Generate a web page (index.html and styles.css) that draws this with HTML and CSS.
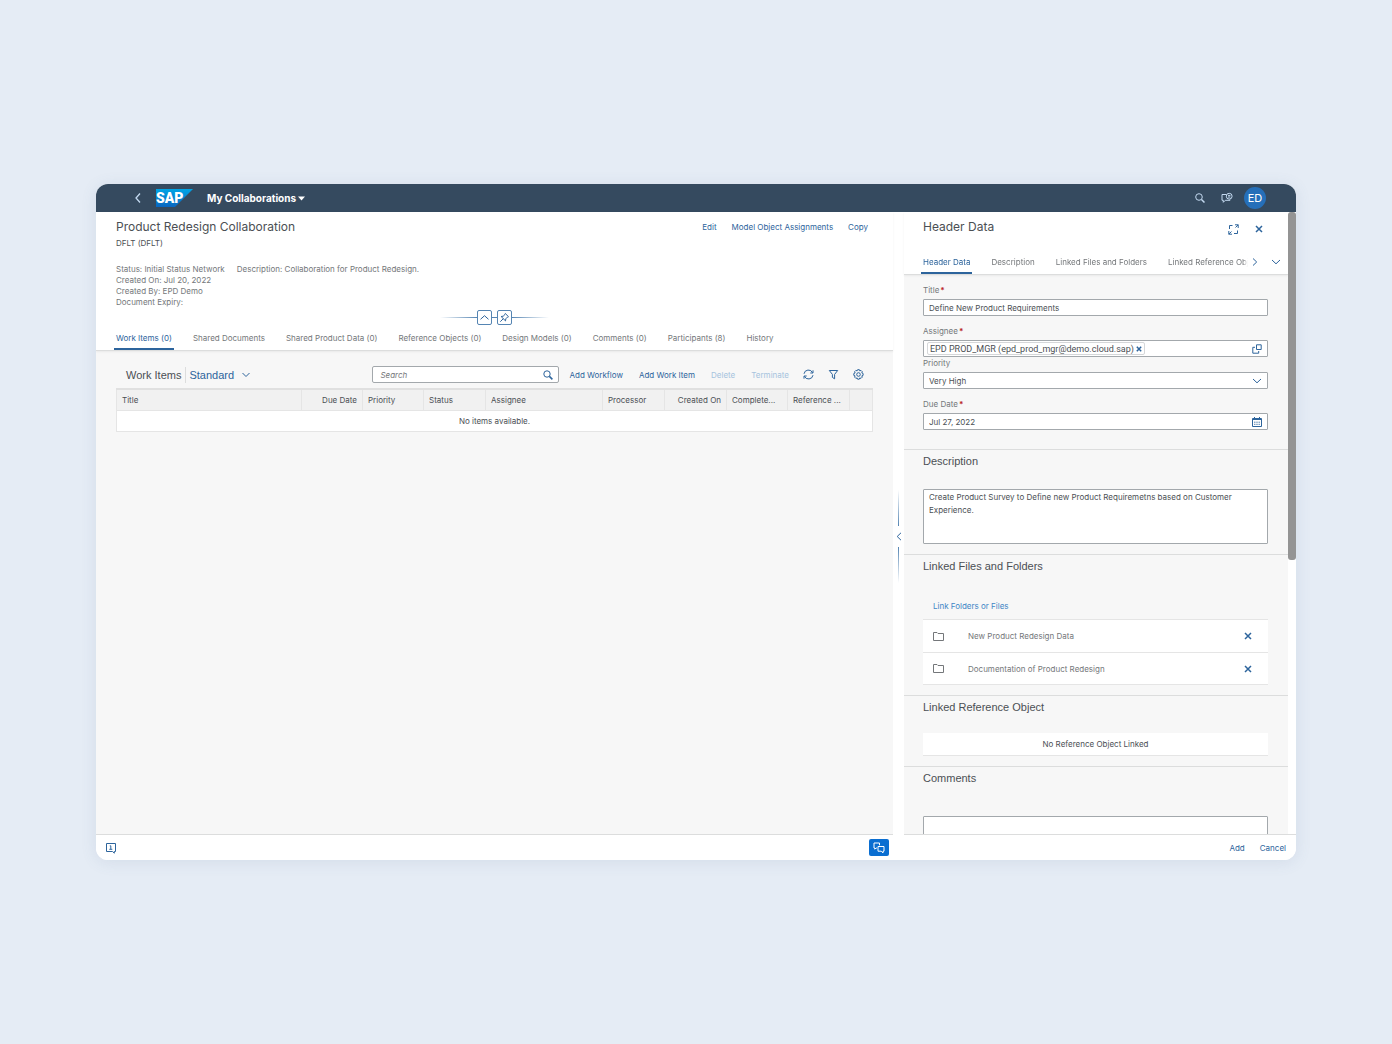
FILE: index.html
```html
<!DOCTYPE html>
<html lang="en">
<head>
<meta charset="utf-8">
<meta name="viewport" content="width=device-width, initial-scale=1">
<title>My Collaborations</title>
<link rel="stylesheet" href="styles.css">
</head>
<body>
<div class="app">
  <header class="shell">
    <button class="icon-btn shell-back" aria-label="Back"><svg width="8" height="12" viewBox="0 0 8 12"><path d="M6 1.500 2 6l4 4.500" stroke-width="1.300"/></svg></button>
    <svg class="logo" width="37" height="18" viewBox="0 0 37 18" role="img" aria-label="SAP">
      <defs><linearGradient id="sap" x1="0" y1="0" x2="0" y2="1"><stop offset="0" stop-color="#00a5e5"/><stop offset="1" stop-color="#0a66c0"/></linearGradient></defs>
      <path d="M0 0h37L19 18H0z" fill="url(#sap)"/>
      <text x="0" y="14">SAP</text>
    </svg>
    <button class="shell-title">My Collaborations <svg width="7" height="5" viewBox="0 0 7 5"><path d="M0 .5h7L3.500 4.500z"/></svg></button>
    <div class="shell-tools">
      <button class="icon-btn" aria-label="Search"><svg width="12" height="12" viewBox="0 0 12 12"><circle cx="5" cy="5" r="3.300"/><path d="m7.500 7.500 3 3" stroke-width="1.500"/></svg></button>
      <button class="icon-btn" aria-label="Help"><svg width="12" height="12" viewBox="0 0 12 12"><path d="M5.500 2.500H1v5.800h1.300v2l2-2H9V7.500"/><circle cx="8.200" cy="4.200" r="2.900"/><path d="M7 3.400h2.400M7 5h2.400"/></svg></button>
      <button class="avatar">ED</button>
    </div>
  </header>

  <main class="workspace">
    <section class="page">
      <div class="page-head">
        <div class="title-row">
          <h1>Product Redesign Collaboration</h1>
          <div class="actions">
            <button class="link-btn">Edit</button>
            <button class="link-btn">Model Object Assignments</button>
            <button class="link-btn">Copy</button>
          </div>
        </div>
        <p class="subtitle">DFLT (DFLT)</p>
        <div class="facts">
          <div class="fact-row"><span>Status: Initial Status Network</span><span>Description: Collaboration for Product Redesign.</span></div>
          <div>Created On: Jul 20, 2022</div>
          <div>Created By: EPD Demo</div>
          <div>Document Expiry:</div>
        </div>
        <div class="collapse">
          <span class="ray ray-left"></span>
          <button class="square-btn" aria-label="Collapse header"><svg width="11" height="11" viewBox="0 0 11 11"><path d="m1.500 7.300 4-3.600 4 3.600"/></svg></button>
          <span class="joint"></span>
          <button class="square-btn" aria-label="Pin header"><svg width="11" height="11" viewBox="0 0 11 11"><path d="M6.300 1.500 9.500 4.700 8.600 5 6.800 6.800 6.500 8.900 2.100 4.500l2.100-.3L6 2.400zM4.300 6.700 1.300 9.700"/></svg></button>
          <span class="ray ray-right"></span>
        </div>
        <nav class="tabs">
          <a href="#items" class="tab active">Work Items (0)</a>
          <a href="#documents" class="tab">Shared Documents</a>
          <a href="#data" class="tab">Shared Product Data (0)</a>
          <a href="#objects" class="tab">Reference Objects (0)</a>
          <a href="#models" class="tab">Design Models (0)</a>
          <a href="#comments" class="tab">Comments (0)</a>
          <a href="#participants" class="tab">Participants (8)</a>
          <a href="#history" class="tab">History</a>
        </nav>
      </div>

      <div class="page-body" id="items">
        <div class="toolbar">
          <h2>Work Items</h2>
          <button class="variant">Standard <svg width="10" height="6" viewBox="0 0 10 6"><path d="m1.500 1 3.500 3.500L8.500 1"/></svg></button>
          <div class="search">
            <input type="search" placeholder="Search" aria-label="Search work items">
            <button class="icon-btn" aria-label="Run search"><svg width="10" height="10" viewBox="0 0 10 10"><circle cx="4" cy="4" r="3.200"/><path d="m6.400 6.400 3 3" stroke-width="1.500"/></svg></button>
          </div>
          <div class="toolbar-actions">
            <button class="link-btn">Add Workflow</button>
            <button class="link-btn">Add Work Item</button>
            <button class="link-btn" disabled>Delete</button>
            <button class="link-btn" disabled>Terminate</button>
          </div>
          <div class="toolbar-icons">
            <button class="icon-btn" aria-label="Refresh"><svg width="11" height="11" viewBox="0 0 11 11"><path d="M1 4.800A4.500 4.500 0 0 1 9.600 3.800M10 6.200A4.500 4.500 0 0 1 1.400 7.200M10 1.300v2.700H7.300M1 9.700V7h2.700"/></svg></button>
            <button class="icon-btn" aria-label="Filter"><svg width="11" height="11" viewBox="0 0 11 11"><path d="M1.300 1.500h8.400L6.600 5.400v4.400L4.400 8.400v-3z"/></svg></button>
            <button class="icon-btn" aria-label="Settings"><svg width="11" height="11" viewBox="0 0 11 11"><path d="m4.600.7h1.800l.4 1.200 1.200-.5 1.300 1.300-.5 1.200 1.300.6v1.900l-1.300.5.5 1.200-1.300 1.300-1.200-.5-.5 1.300H4.600l-.5-1.300-1.200.5-1.300-1.300.5-1.200-1.300-.5V4.500l1.300-.5-.5-1.300 1.300-1.300 1.200.5z"/><circle cx="5.500" cy="5.500" r="1.800"/></svg></button>
          </div>
        </div>
        <table>
          <colgroup><col><col class="c-slim"><col class="c-slim"><col class="c-mid"><col class="c-wide"><col class="c-mid"><col class="c-mid"><col class="c-slim"><col class="c-mid"><col class="c-nav"></colgroup>
          <thead>
            <tr><th>Title</th><th class="num">Due Date</th><th>Priority</th><th>Status</th><th>Assignee</th><th>Processor</th><th class="num">Created On</th><th>Complete...</th><th>Reference ...</th><th></th></tr>
          </thead>
          <tbody><tr><td colspan="10">No items available.</td></tr></tbody>
        </table>
      </div>
    </section>

    <div class="splitter">
      <span class="beam beam-up"></span>
      <button class="icon-btn" aria-label="Resize panel"><svg width="6" height="9" viewBox="0 0 6 9"><path d="M5 .8 1.200 4.500 5 8.200"/></svg></button>
      <span class="beam beam-down"></span>
    </div>

    <aside class="panel">
      <div class="panel-main">
        <div class="panel-head">
          <div class="panel-title">
            <h2>Header Data</h2>
            <button class="icon-btn" aria-label="Full screen"><svg width="11" height="11" viewBox="0 0 11 11"><path d="M4.500 1.500H1.500V5M6 9.500h3.500V6.500M7 .8h3.200V4M10.200.8 7.500 3.500M4 10.200H.8V7M.8 10.200 3.500 7.500"/></svg></button>
            <button class="icon-btn" aria-label="Close"><svg class="cross" width="8" height="8" viewBox="0 0 8 8"><path d="m1 1 6 6M7 1 1 7"/></svg></button>
          </div>
          <div class="panel-nav">
            <nav class="tabs">
              <a href="#header-data" class="tab active">Header Data</a>
              <a href="#description" class="tab">Description</a>
              <a href="#files" class="tab">Linked Files and Folders</a>
              <a href="#reference" class="tab">Linked Reference Object</a>
            </nav>
            <button class="icon-btn" aria-label="Next tabs"><svg width="6" height="10" viewBox="0 0 6 10"><path d="M1 1.500 4.700 5 1 8.500"/></svg></button>
            <button class="icon-btn" aria-label="All tabs"><svg width="10" height="6" viewBox="0 0 10 6"><path d="m1 1 4 3.800L9 1"/></svg></button>
          </div>
        </div>
        <div class="panel-scroll">
          <section class="form" id="header-data">
            <div class="field">
              <label for="title">Title<i>*</i></label>
              <div class="box"><input id="title" type="text" value="Define New Product Requirements"></div>
            </div>
            <div class="field">
              <label for="assignee">Assignee<i>*</i></label>
              <div class="box has-token">
                <span class="token">EPD PROD_MGR (epd_prod_mgr@demo.cloud.sap)<button class="icon-btn" aria-label="Remove assignee"><svg class="cross" width="6" height="6" viewBox="0 0 6 6"><path d="m.8.8 4.400 4.400M5.200.8.8 5.200"/></svg></button></span>
                <input id="assignee" type="text">
                <button class="icon-btn" aria-label="Choose assignee"><svg width="10" height="10" viewBox="0 0 10 10"><path d="M4.500.8h4.700v4.700H4.500zM3 3.300H.8v5.900h5.900V7"/></svg></button>
              </div>
            </div>
            <div class="field tight">
              <label for="priority">Priority</label>
              <div class="box">
                <select id="priority"><option>Very High</option><option>High</option><option>Medium</option></select>
                <svg width="10" height="6" viewBox="0 0 10 6"><path d="m1 1 4 3.800L9 1"/></svg>
              </div>
            </div>
            <div class="field">
              <label for="due">Due Date<i>*</i></label>
              <div class="box">
                <input id="due" type="text" value="Jul 27, 2022">
                <button class="icon-btn" aria-label="Open calendar"><svg width="10" height="10" viewBox="0 0 10 10"><path d="M.5 1.500h9v8h-9zM.5 2.500h9M2.500 0v2M7.500 0v2"/><path d="M2.200 5.200h6M2.200 7.300h6" stroke-dasharray="1.200 1"/></svg></button>
              </div>
            </div>
          </section>
          <section class="block" id="description">
            <h3>Description</h3>
            <textarea aria-label="Description">Create Product Survey to Define new Product Requiremetns based on Customer Experience.</textarea>
          </section>
          <section class="block" id="files">
            <h3>Linked Files and Folders</h3>
            <a class="file-link" href="#files">Link Folders or Files</a>
            <ul class="files">
              <li><svg width="11" height="9" viewBox="0 0 11 9"><path d="M.5 8.500v-8h3.500l1 1h5.500v7z"/></svg><span>New Product Redesign Data</span><button class="icon-btn" aria-label="Unlink New Product Redesign Data"><svg class="cross" width="8" height="8" viewBox="0 0 8 8"><path d="m1 1 6 6M7 1 1 7"/></svg></button></li>
              <li><svg width="11" height="9" viewBox="0 0 11 9"><path d="M.5 8.500v-8h3.500l1 1h5.500v7z"/></svg><span>Documentation of Product Redesign</span><button class="icon-btn" aria-label="Unlink Documentation of Product Redesign"><svg class="cross" width="8" height="8" viewBox="0 0 8 8"><path d="m1 1 6 6M7 1 1 7"/></svg></button></li>
            </ul>
          </section>
          <section class="block" id="reference">
            <h3>Linked Reference Object</h3>
            <p class="empty">No Reference Object Linked</p>
          </section>
          <section class="block" id="notes">
            <h3>Comments</h3>
            <textarea class="note-input" aria-label="Comments"></textarea>
          </section>
        </div>
      </div>
      <div class="scrollbar"><span></span></div>
    </aside>

    <footer class="page-foot">
      <button class="icon-btn" aria-label="Messages"><svg width="12" height="12" viewBox="0 0 12 12"><path d="M1.500 1.500h9v8H9.300v1.700L7.500 9.500h-6z"/><path d="M4.800 3.800h1v3.400M4.300 7.300h3"/></svg></button>
      <button class="chat" aria-label="Chat"><svg width="12" height="12" viewBox="0 0 12 12"><path d="M4 6H3L1.800 7.200V6H1V1h5.500v2.300M5 4.500h6v4.700h-1v1.700L8.200 9.200H5z"/></svg></button>
    </footer>
    <footer class="panel-foot">
      <button class="link-btn">Add</button>
      <button class="link-btn">Cancel</button>
    </footer>
  </main>
</div>
</body>
</html>
```
FILE: styles.css
```css
* { box-sizing: border-box; }

:root {
  --text: #4b4f54;
  --label: #74777a;
  --blue: #2d649c;
  --line: #dcdddd;
  --field: #a3a8ac;
  --surface: #f7f7f7;
}

body {
  margin: 0;
  padding: 184px 96px;
  background: #e5ecf5;
  color: var(--text);
  font: 8px/12px Inter, "Liberation Sans", sans-serif;
}

h1, h2, h3, p, ul { margin: 0; padding: 0; font-weight: 400; }
h1, h2 { font-size: 12px; line-height: 16px; }
h3, .toolbar h2, .variant { font: 11px/16px "Liberation Sans", sans-serif; }
a { color: inherit; text-decoration: none; }
button, input, select, textarea { margin: 0; padding: 0; border: 0; background: none; color: inherit; font: inherit; outline: 0; }
button { cursor: pointer; white-space: nowrap; }
svg { display: block; flex: none; fill: none; stroke: currentColor; }
.cross { stroke-width: 1.5; }
.icon-btn { display: flex; flex: none; align-items: center; justify-content: center; color: var(--blue); }
.link-btn { color: var(--blue); }
.link-btn:disabled { color: #a6c3de; }

.app {
  display: flex;
  flex-direction: column;
  height: calc(100vh - 368px);
  border-radius: 12px;
  overflow: hidden;
  background: #fff;
  box-shadow: 0 2px 16px rgba(80, 105, 150, .12);
}

/* Shell bar */
.shell { display: flex; flex: none; align-items: center; height: 28px; padding: 0 30px 0 38px; background: #354a5f; color: #fff; }
.shell .icon-btn { color: #c3d9f0; }
.shell-back { width: 8px; }
.logo { margin-left: 14px; stroke: none; }
.logo text { font: 900 14px Roboto, sans-serif; fill: #fff; }
.shell-title { display: flex; align-items: center; gap: 2px; margin-left: 14px; font-size: 10px; font-weight: 700; }
.shell-title svg { fill: currentColor; stroke: none; }
.shell-tools { display: flex; align-items: center; gap: 15px; margin-left: auto; }
.avatar { width: 22px; height: 22px; margin-left: -4px; border-radius: 50%; background: #256fb9; font-size: 11px; }

.workspace { display: grid; flex: 1; grid-template-columns: minmax(0, 1fr) 11px 392px; grid-template-rows: minmax(0, 1fr) 25px; min-height: 0; }

/* Object page */
.page { display: flex; flex-direction: column; border-bottom: 1px solid var(--line); background: var(--surface); }
.page-head { padding: 7px 20px 0; border-bottom: 1px solid var(--line); background: #fff; box-shadow: 0 1px 2px rgba(0, 0, 0, .06); }
.title-row { display: flex; align-items: center; justify-content: space-between; }
.actions { display: flex; gap: 15px; padding-right: 5px; }
.subtitle { margin-top: 2px; }
.facts { margin-top: 14px; color: var(--label); line-height: 11px; }
.fact-row { display: flex; gap: 12px; line-height: 12px; }
.collapse { display: flex; align-items: center; justify-content: center; margin-top: 2px; }
.square-btn { display: grid; place-items: center; width: 15px; height: 15px; border: 1px solid #5585b3; border-radius: 2px; color: var(--blue); }
.ray { width: 37px; height: 1px; }
.ray-left { background: linear-gradient(to left, #5585b3, transparent); }
.ray-right { background: linear-gradient(to right, #5585b3, transparent); }
.joint { width: 5px; height: 1px; background: #5585b3; }
.tabs { display: flex; gap: 21px; }
.tab { position: relative; flex: none; height: 25px; padding-top: 7px; color: var(--label); }
.tab.active { color: var(--blue); }
.tab.active::after { content: ""; position: absolute; right: -2px; bottom: 0; left: -2px; height: 2px; background: var(--blue); }

.page-body { flex: 1; padding: 14px 20px; }
.toolbar { display: flex; align-items: center; height: 19px; margin-bottom: 4px; padding: 0 9px 0 10px; }
.variant { display: flex; align-items: center; gap: 7px; margin-left: 4px; padding-left: 3px; border-left: 1px solid var(--line); color: var(--blue); }
.search { display: flex; align-items: center; width: 187px; height: 17px; margin-left: auto; padding: 0 5px 0 7px; border: 1px solid var(--field); border-radius: 2px; background: #fff; }
.search input { flex: 1; min-width: 0; }
.search input::placeholder { color: var(--label); font-style: italic; opacity: 1; }
.toolbar-actions { display: flex; gap: 16px; margin-left: 10px; }
.toolbar-icons { display: flex; gap: 14px; margin-left: 14px; }

table { width: 100%; table-layout: fixed; border-collapse: collapse; border: 1px solid #e5e5e5; background: #fff; }
.c-slim { width: 61px; }
.c-mid { width: 62px; }
.c-wide { width: 117px; }
.c-nav { width: 23px; }
th, td { height: 21px; padding: 0 5px; font-weight: 400; text-align: left; }
th { border-top: 2px solid #e0e0e0; border-right: 1px solid #e5e5e5; border-bottom: 1px solid #e5e5e5; background: #f1f1f1; white-space: nowrap; }
.num { text-align: right; }
td { text-align: center; }

/* Splitter */
.splitter { display: flex; grid-row: 1 / 3; grid-column: 2; flex-direction: column; align-items: center; justify-content: center; gap: 6px; }
.beam { width: 1px; height: 36px; }
.beam-up { background: linear-gradient(to top, #5585b3, transparent); }
.beam-down { background: linear-gradient(to bottom, #5585b3, transparent); }

/* Side panel */
.panel { display: flex; grid-column: 3; min-height: 0; border-bottom: 1px solid var(--line); }
.panel-main { display: flex; flex: 1; flex-direction: column; min-width: 0; background: var(--surface); }
.panel-head { padding: 7px 7px 0 19px; border-bottom: 1px solid var(--line); background: #fff; box-shadow: 0 1px 2px rgba(0, 0, 0, .06); }
.panel-title { display: flex; gap: 16px; align-items: flex-end; height: 16px; padding-right: 18px; }
.panel-title h2 { flex: 1; }
.panel-title .icon-btn { height: 12px; }
.panel-nav { display: flex; align-items: center; gap: 13px; margin-top: 14px; }
.panel-nav .tabs { flex: 1; min-width: 0; margin: 0 -9px 0 -2px; padding-left: 2px; overflow: hidden; mask-image: linear-gradient(to left, transparent, #000 5px); }
.panel-scroll { flex: 1; min-height: 0; overflow: hidden; }
.scrollbar { width: 8px; background: #fff; }
.scrollbar span { display: block; height: 56%; border-radius: 3px; background: #949494; }

.form { padding: 9px 20px 19px 19px; }
.field { margin-bottom: 9px; }
.field:has(+ .tight), .field:last-child { margin-bottom: 0; }
.field label { display: block; padding-bottom: 3px; color: var(--label); }
.field label i { margin-left: 1px; color: #bb2b2b; font-style: normal; font-weight: 700; }
.box { display: flex; align-items: center; height: 17px; padding: 0 5px; border: 1px solid var(--field); border-radius: 1px; background: #fff; }
.box input, .box select { flex: 1; min-width: 0; }
.box select { appearance: none; }
.box svg { color: var(--blue); }
.has-token { padding-left: 3px; }
.token { display: flex; align-items: center; gap: 2px; height: 13px; padding: 0 2px; border: 1px solid #d5d7d9; border-radius: 2px; font-family: Roboto, sans-serif; font-size: 9px; }

.block { padding: 3px 20px 10px 19px; border-top: 1px solid var(--line); }
textarea { display: block; width: 100%; height: 55px; margin-top: 20px; padding: 1px 5px; border: 1px solid var(--field); border-radius: 1px; background: #fff; line-height: 13px; resize: none; }
.note-input { margin-top: 30px; }
.file-link { display: block; margin: 26px 10px 7px; color: #3f86c6; }
.files { list-style: none; }
.files li { display: flex; align-items: center; height: 33px; padding: 0 16px 0 10px; border-top: 1px solid #e5e5e5; background: #fff; color: var(--label); }
.files li:last-child { border-bottom: 1px solid #e5e5e5; }
.files span { flex: 1; margin-left: 24px; }
.empty { margin-top: 18px; padding: 5px; border-bottom: 1px solid #e5e5e5; background: #fff; text-align: center; }

/* Footers */
.page-foot, .panel-foot { display: flex; align-items: center; background: #fff; }
.page-foot { grid-row: 2; grid-column: 1; justify-content: space-between; padding: 0 4px 0 9px; }
.chat { display: grid; place-items: center; width: 20px; height: 17px; border-radius: 2px; background: #0a6ed1; color: #fff; }
.panel-foot { grid-row: 2; grid-column: 3; justify-content: flex-end; gap: 15px; padding: 0 10px; }
```
